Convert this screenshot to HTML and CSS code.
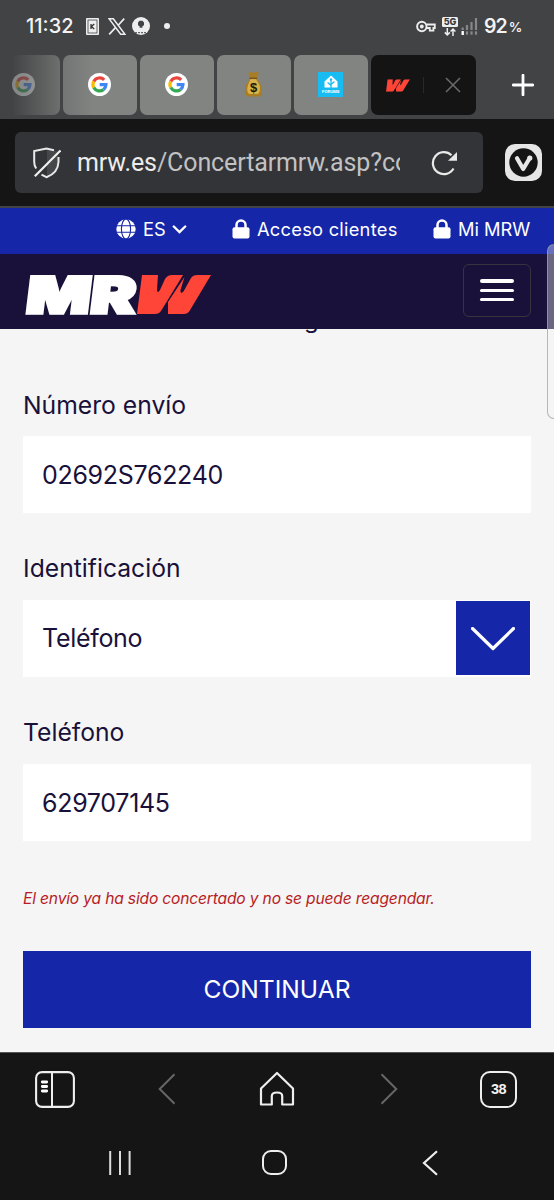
FILE: index.html
```html
<!DOCTYPE html>
<html lang="es">
<head>
<meta charset="utf-8">
<meta name="viewport" content="width=device-width">
<title>MRW</title>
<link rel="stylesheet" href="styles.css">
</head>
<body>
<svg class="defs" width="0" height="0" aria-hidden="true">
  <symbol id="google" viewBox="0 0 24 24">
    <circle cx="12" cy="12" r="12" fill="#fff"/>
    <g fill="none" stroke-width="3.4">
      <path d="M16.9 7.2A6.8 6.8 0 0 0 6 8.8" stroke="#e8453c"/>
      <path d="M6 8.8A6.8 6.8 0 0 0 6 15.2" stroke="#fbbb05"/>
      <path d="M6 15.2A6.8 6.8 0 0 0 16.3 17.2" stroke="#34a853"/>
      <path d="M16.3 17.2A6.8 6.8 0 0 0 18.7 12.2H12.2" stroke="#4285f4"/>
    </g>
  </symbol>
  <symbol id="emblem" viewBox="0 0 74 39">
    <path fill="#ff4438" d="M5 0H21L20 15Q20.5 19 23 15L28 4Q30.500 0 35 0H46L24 36Q22 39 18 39H0ZM47.500 2 31 27V39H47Q50.500 39 52.500 36L74 0H60Q56 0 54 3L46.500 16.500Q43 20 43.500 15Z"/>
  </symbol>
  <symbol id="lock" viewBox="0 0 18 20">
    <path d="M4.5 10V6a4.5 4.5 0 0 1 9 0v4" fill="none" stroke="#fff" stroke-width="2.5"/>
    <rect x=".5" y="8.2" width="17" height="11.3" rx="2" fill="#fff"/>
  </symbol>
</svg>

<header class="status">
  <span class="clock">11:32</span>
  <svg class="s-card" viewBox="0 0 13 17"><rect width="13" height="17" rx="1" fill="#eee"/><rect x="2" y="2" width="9" height="13" fill="#eee" stroke="#424345" stroke-width=".8"/><path d="M5 6v5M8.200 6 5.400 8.500 8.200 11" fill="none" stroke="#333" stroke-width="1.3"/></svg>
  <svg class="s-x" viewBox="0 0 18 17"><path d="M1 .7H5.300L17 16.300H12.700Z" fill="none" stroke="#eee" stroke-width="1.5"/><path d="M16.200.6 10 7.500M7.500 9.600 1.200 16.400" stroke="#eee" stroke-width="1.7"/></svg>
  <svg class="s-badge" viewBox="0 0 18 18"><circle cx="9" cy="9" r="9" fill="#eee"/><path d="M6 5.500 7.500 3.800H10.500L12 5.500V8.300L10.400 9.300V10.800H7.600V9.300L6 8.300Z" fill="#424345"/><path d="M3 15.700h12" stroke="#424345" stroke-dasharray="2 1"/></svg>
  <i class="s-dot"></i>
  <svg class="s-key" viewBox="0 0 20 13"><circle cx="5.8" cy="6.5" r="4.7" fill="none" stroke="#eee" stroke-width="1.9"/><circle cx="5.8" cy="6.5" r="1.9" fill="#eee"/><path d="M10.500 4.500H18.800V8H17.400V10.600H13.800V8H10.500" fill="none" stroke="#eee" stroke-width="1.8"/></svg>
  <span class="net"><b>5G</b><svg viewBox="0 0 14 8"><path d="M4.300 0V6.600M1.800 4.400 4.300 6.900 6.800 4.400M10 8V1.200M7.600 3.600 10 1.100 12.400 3.600" fill="none" stroke="#eee" stroke-width="1.5"/></svg></span>
  <svg class="s-signal" viewBox="0 0 17 18"><path d="M6 13V8M10.500 13V5M15 13V1M1.700 13V10.500" stroke="#85878a" stroke-width="2.2"/><path d="M1.700 18V14" stroke="#fff" stroke-width="2.4"/><path d="M6 17.500V14.500M10.500 17.500V14.500M15 17.500V14.500" stroke="#a0a1a3" stroke-width="2.2" stroke-dasharray="1.2 .6"/></svg>
  <span class="battery">92<small>%</small></span>
</header>

<nav class="tabs">
  <div class="tab tab-fade"><svg class="g"><use href="#google"/></svg></div>
  <div class="tab tab-soft"><svg class="g"><use href="#google"/></svg></div>
  <div class="tab"><svg class="g"><use href="#google"/></svg></div>
  <div class="tab"><svg class="bag" viewBox="0 0 19 26">
    <path d="M4 2 7 1 9.500 2 12 .8 15 2 12.500 7 17 14Q20 25 15 25.500H4Q-1 25 2 14L6.500 7Z" fill="#a97d24"/><path d="M6.500 8H12L15.500 14Q17 21 14 23H5Q2 21 4 14Z" fill="#d8b148"/><path d="M5.500 7.300H13" stroke="#7b541b" stroke-width="1.5"/>
    <text x="9.5" y="21.3" text-anchor="middle">$</text></svg></div>
  <div class="tab"><span class="forum"><svg viewBox="0 0 14 13"><path d="M7 0 13.500 6V12H.5V6Z" fill="#fff"/><path d="M7 13V4.500M7 10 3.600 7M7 9l3.400-3" fill="none" stroke="#18bcf2" stroke-width="1.3"/><circle cx="7" cy="4" r="1.2" fill="#18bcf2"/></svg><b>FORUMS</b></span></div>
  <div class="tab tab-active"><svg class="mark" viewBox="0 0 74 39"><use href="#emblem"/></svg><i></i><svg class="close" viewBox="0 0 16 16"><path d="M1 1 15 15M15 1 1 15" stroke="#6b6b6b" stroke-width="1.5"/></svg></div>
  <svg class="plus" viewBox="0 0 22 22"><path d="M11 1.200V20.800M1.200 11H20.800" stroke="#fff" stroke-width="2.8" stroke-linecap="round"/></svg>
</nav>

<section class="address">
  <div class="field">
    <svg class="shield" viewBox="0 0 28 32"><path d="M14 1.500 25 4.500V15Q25 25 14 29.500Z" fill="#46474a"/><path d="M21 3.200 13.500 1.500 1.200 4V15Q1.200 18.500 3.200 21.500M25.500 10V15Q25 26 13.500 30.200L8.500 27.600" fill="none" stroke="#e9e9e9" stroke-width="2"/><path d="M27.500 3.500 1.800 29.200" stroke="#f0f0f0" stroke-width="2.2"/></svg>
    <span class="url"><b>mrw.es</b>/Concertarmrw.asp?co</span>
    <svg class="reload" viewBox="0 0 27 26"><path d="M22.500 18.500A11 11 0 1 1 20.500 5.200" fill="none" stroke="#e9e9e9" stroke-width="2.2"/><path d="M26 2V10.800H17Z" fill="#e9e9e9"/></svg>
  </div>
  <svg class="vivaldi" viewBox="0 0 37 37"><rect width="37" height="37" rx="10" fill="#e6e6e6"/><circle cx="18.5" cy="18.5" r="14.2" fill="#151515"/><path d="M12 14.200 18.200 25 24.800 14" fill="none" stroke="#e6e6e6" stroke-width="4.2" stroke-linecap="round" stroke-linejoin="round"/><circle cx="24.8" cy="14" r="2.6" fill="#e6e6e6"/></svg>
</section>

<section class="topbar">
  <svg class="globe" viewBox="0 0 20 20"><circle cx="10" cy="10" r="9.7" fill="#fff"/><g fill="none" stroke="#1526a9" stroke-width="1.1"><ellipse cx="10" cy="10" rx="4.6" ry="10"/><path d="M0 6.800H20M0 13.200H20"/></g></svg>
  <span class="lang">ES</span>
  <svg class="caret" viewBox="0 0 14 9"><path d="M1.300 1.500 7 7 12.700 1.500" fill="none" stroke="#fff" stroke-width="2.4" stroke-linecap="round"/></svg>
  <svg class="lock"><use href="#lock"/></svg>
  <span class="clients">Acceso clientes</span>
  <svg class="lock"><use href="#lock"/></svg>
  <span class="mine">Mi MRW</span>
</section>

<section class="brandbar">
  <div class="logo"><svg class="mr" viewBox="0 0 114 40"><text transform="translate(1.8 38) skewX(-7)" textLength="109" lengthAdjust="spacingAndGlyphs">MR</text></svg><svg class="wm" viewBox="0 0 74 39" aria-label="W"><use href="#emblem"/></svg></div>
  <button class="menu" aria-label="Menú"><i></i><i></i><i></i></button>
</section>

<main class="page">
  <div class="clip"><span>g</span></div>
  <label>Número envío</label>
  <div class="input"><span>02692S762240</span></div>
  <label>Identificación</label>
  <div class="input select"><span>Teléfono</span><span class="drop"><svg viewBox="0 0 44 24"><path d="M1.500 1.500 22 21.500 42.500 1.500" fill="none" stroke="#fff" stroke-width="3.2" stroke-linecap="round" stroke-linejoin="round"/></svg></span></div>
  <label>Teléfono</label>
  <div class="input"><span>629707145</span></div>
  <p class="error"><span>El envío ya ha sido concertado y no se puede reagendar.</span></p>
  <button class="submit"><span>CONTINUAR</span></button>
</main>
<div class="scroll"></div>

<footer>
  <div class="tools">
    <svg class="panel" viewBox="0 0 40 37"><rect x="1.1" y="1.1" width="37.8" height="34.8" rx="6" fill="none" stroke="#eee" stroke-width="2.1"/><path d="M17 1V36" stroke="#eee" stroke-width="2"/><path d="M7.300 11h4.400M7.300 15.500h4.400M7.300 20h4.400" stroke="#fff" stroke-width="2.8" stroke-linecap="round"/></svg>
    <svg class="prev" viewBox="0 0 18 32"><path d="M16.500 1.200 1.700 16 16.500 30.800" fill="none" stroke="#666" stroke-width="2"/></svg>
    <svg class="home" viewBox="0 0 36 36"><path d="M2 17.500 18 2 34 17.500V33.500H23.200V25Q23.200 21.500 18 21.500T12.800 25V33.500H2Z" fill="none" stroke="#eee" stroke-width="2.2" stroke-linejoin="round"/></svg>
    <svg class="next" viewBox="0 0 18 32"><path d="M1.500 1.200 16.300 16 1.500 30.800" fill="none" stroke="#666" stroke-width="2"/></svg>
    <span class="count">38</span>
  </div>
  <div class="system">
    <svg class="recents" viewBox="0 0 24 24"><path d="M2.200 0V24M12 0V24M21.600 0V24" stroke="#ddd" stroke-width="2"/></svg>
    <i class="circle"></i>
    <svg class="back" viewBox="0 0 16 26"><path d="M15 1.300 2 13 15 24.700" fill="none" stroke="#eee" stroke-width="2.2"/></svg>
  </div>
</footer>
</body>
</html>
```
FILE: styles.css
```css
* { box-sizing: border-box; }
body { margin: 0; width: 554px; height: 1200px; overflow: hidden; position: relative; background: #f5f5f5; font-family: Inter, "Liberation Sans", sans-serif; color: #19113a; }
svg { display: block; flex: none; }
span, i { flex: none; }
button { border: 0; padding: 0; font: inherit; color: inherit; }
.defs { position: absolute; }

.status { height: 52px; background: #424345; display: flex; align-items: center; padding-left: 26px; color: #f3f3f3; }
.clock { width: 60px; font: 500 20px/24px Inter, sans-serif; letter-spacing: 0; white-space: nowrap; }
.s-card { width: 13px; height: 17px; }
.s-x { width: 18px; height: 17px; margin-left: 9px; }
.s-badge { width: 18px; height: 18px; margin-left: 6px; }
.s-dot { width: 6px; height: 6px; border-radius: 3px; background: #eee; margin-left: 14px; }
.s-key { width: 20px; height: 13px; margin-left: 246px; }
.net { width: 16px; height: 19px; margin-left: 6px; }
.net b { display: block; height: 10px; border-radius: 1.5px; background: #eee; color: #38393b; font: 800 9px/10px Inter, sans-serif; text-align: center; }
.net svg { width: 16px; height: 8px; margin-top: 1px; }
.s-signal { width: 17px; height: 18px; margin-left: 3px; }
.battery { margin-left: 6px; font: 600 19.5px/24px Inter, sans-serif; letter-spacing: -1px; white-space: nowrap; }
.battery small { font-size: 13.5px; font-weight: 600; margin-left: 2px; vertical-align: 1px; }

.tabs { height: 67px; background: #424345; display: flex; align-items: flex-start; gap: 2.5px; padding-top: 3px; }
.tab { width: 74.5px; height: 60px; border-radius: 7px; background: #828482; display: flex; align-items: center; justify-content: center; flex: none; }
.tab-fade { width: 60px; padding-right: 13px; border-radius: 0 7px 7px 0; background: linear-gradient(90deg, #424345 12px, #6d6f6e); }
.tab-fade svg { opacity: .35; }
.tab-soft { background: linear-gradient(90deg, #737574, #828482 30px); }
.g { width: 23px; height: 23px; margin-bottom: 2px; }
.bag { width: 19px; height: 26px; margin-bottom: 2px; }
.bag text { font: bold 13px "Liberation Sans", sans-serif; fill: #211806; }
.forum { width: 25px; height: 25px; background: #18bcf2; display: flex; flex-direction: column; align-items: center; padding-top: 3px; margin-bottom: 1px; }
.forum svg { width: 14px; height: 14px; }
.forum b { font: 700 4px/5px Inter, sans-serif; color: #fff; }
.tab-active { width: 105.5px; background: #141414; justify-content: flex-start; padding-left: 15px; }
.mark { width: 24px; height: 13px; }
.tab-active i { width: 1px; height: 16px; margin-left: 13px; background: #292929; }
.close { width: 16px; height: 16px; margin-left: 21px; }
.plus { width: 22px; height: 22px; margin: 19px 0 0 33.5px; }

.address { height: 89px; background: #151515; border-bottom: 2.5px solid #424345; display: flex; align-items: center; padding-left: 15px; }
.field { width: 468px; height: 61px; border-radius: 6px; background: #333437; display: flex; align-items: center; padding-left: 18px; }
.shield { width: 28px; height: 32px; }
.url { width: 323px; margin-left: 16px; overflow: hidden; white-space: nowrap; font: 400 25px/34px Roboto, sans-serif; color: #c2c2c3; letter-spacing: -.12px; }
.url b { font-weight: 400; color: #ececec; }
.reload { width: 27px; height: 26px; margin-left: 31px; }
.vivaldi { width: 37px; height: 37px; margin-left: 22px; }

.topbar { height: 46px; background: #1526a9; color: #fff; display: flex; align-items: center; padding: 0 0 4px 116px; font-size: 18.3px; line-height: 24px; white-space: nowrap; }
.globe { width: 20px; height: 20px; }
.lang { margin-left: 7px; width: 30px; }
.caret { width: 15px; height: 9px; margin: 0 45px 0 -1px; }
.lock { width: 18px; height: 20px; margin-bottom: 1px; }
.clients { width: 176px; margin-left: 7px; letter-spacing: .25px; }
.mine { margin-left: 7px; }

.brandbar { height: 74.5px; background: #19113a; display: flex; align-items: center; justify-content: space-between; padding: 0 23px; }
.logo { display: flex; margin-top: 8px; }
.mr { width: 114px; height: 40px; overflow: visible; }
.mr text { font: 900 50px Inter, sans-serif; fill: #fff; stroke: #fff; stroke-width: 3.4px; }
.wm { width: 74px; height: 39px; }
.menu { width: 68px; height: 53px; margin-bottom: 2px; border: 1.5px solid #38343f; border-radius: 6px; background: none; display: flex; flex-direction: column; align-items: center; justify-content: center; gap: 6px; }
.menu i { width: 34px; height: 3.4px; border-radius: 2px; background: #fff; }

.page { height: 723.5px; padding: 0 23px; display: flex; flex-direction: column; line-height: 30px; white-space: nowrap; }
.clip { height: 61px; overflow: hidden; padding-left: 281px; flex: none; font-size: 24px; }
.clip span { display: block; margin-top: -24px; }
.page label { height: 46.7px; flex: none; font-size: 24.7px; }
.input { height: 76.8px; background: #fff; display: flex; align-items: center; padding: 1px 0 0 19px; margin-bottom: 40.3px; flex: none; font-size: 25px; letter-spacing: -.3px; }
.select { justify-content: space-between; padding: 0 1.5px 0 19px; }
.drop { width: 74px; height: 74px; background: #1526a9; display: flex; align-items: center; justify-content: center; }
.drop svg { width: 44px; height: 24px; margin-top: 2px; }
.error { margin: 6px 0 0; height: 64px; flex: none; color: #b71c24; font-size: 15.6px; line-height: 24px; font-style: italic; letter-spacing: -.17px; }
.submit { height: 77px; flex: none; background: #1526a9; color: #fff; font-size: 24.6px; }
.scroll { position: absolute; left: 547px; top: 244px; width: 16px; height: 175px; border: 1.5px solid rgba(160,160,160,.75); border-radius: 7px; background: linear-gradient(rgba(205,205,220,.45) 84px, transparent 84px); }

footer { height: 148px; background: #151515; border-top: 1px solid #555; }
.tools { height: 72px; display: flex; align-items: center; padding-left: 35px; }
.panel { width: 40px; height: 37px; }
.prev { width: 18px; height: 32px; margin-left: 83px; }
.home { width: 36px; height: 36px; margin-left: 83px; }
.next { width: 18px; height: 32px; margin-left: 85px; }
.count { width: 37px; height: 37px; margin-left: 82px; border: 2px solid #eee; border-radius: 10px; color: #f2f2f2; font: 700 14.5px/33px "Liberation Sans", sans-serif; letter-spacing: -.5px; text-align: center; }
.system { height: 75px; display: flex; align-items: center; padding-left: 108px; }
.recents { width: 24px; height: 24px; }
.circle { width: 25px; height: 25px; margin-left: 130px; border: 2.2px solid #eee; border-radius: 9px; }
.back { width: 16px; height: 26px; margin-left: 135px; }
```
